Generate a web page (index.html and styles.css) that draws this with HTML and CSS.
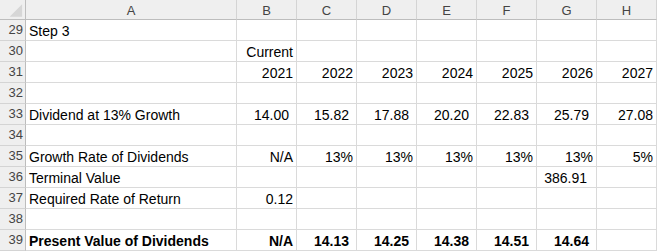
FILE: index.html
```html
<!DOCTYPE html>
<html>
<head>
<meta charset="utf-8">
<link rel="stylesheet" href="styles.css">
</head>
<body>
<div class="sheet">
  <div class="corner"><svg width="26" height="20" viewBox="0 0 26 20"><polygon points="10,17 23,17 23,4" fill="#d6d6d6"/></svg></div>
  <div class="colhead">A</div><div class="colhead">B</div><div class="colhead">C</div><div class="colhead">D</div><div class="colhead">E</div><div class="colhead">F</div><div class="colhead">G</div><div class="colhead last">H</div>

  <div class="rowhead">29</div><div class="cell">Step 3</div><div class="cell"></div><div class="cell"></div><div class="cell"></div><div class="cell"></div><div class="cell"></div><div class="cell"></div><div class="cell"></div>

  <div class="rowhead">30</div><div class="cell"></div><div class="cell num">Current</div><div class="cell"></div><div class="cell"></div><div class="cell"></div><div class="cell"></div><div class="cell"></div><div class="cell"></div>

  <div class="rowhead">31</div><div class="cell"></div><div class="cell num">2021</div><div class="cell num">2022</div><div class="cell num">2023</div><div class="cell num">2024</div><div class="cell num">2025</div><div class="cell num">2026</div><div class="cell num">2027</div>

  <div class="rowhead">32</div><div class="cell"></div><div class="cell"></div><div class="cell"></div><div class="cell"></div><div class="cell"></div><div class="cell"></div><div class="cell"></div><div class="cell"></div>

  <div class="rowhead">33</div><div class="cell">Dividend at 13% Growth</div><div class="cell acc">14.00</div><div class="cell acc">15.82</div><div class="cell acc">17.88</div><div class="cell acc">20.20</div><div class="cell acc">22.83</div><div class="cell acc">25.79</div><div class="cell num">27.08</div>

  <div class="rowhead">34</div><div class="cell"></div><div class="cell"></div><div class="cell"></div><div class="cell"></div><div class="cell"></div><div class="cell"></div><div class="cell"></div><div class="cell"></div>

  <div class="rowhead">35</div><div class="cell">Growth Rate of Dividends</div><div class="cell num">N/A</div><div class="cell num">13%</div><div class="cell num">13%</div><div class="cell num">13%</div><div class="cell num">13%</div><div class="cell num">13%</div><div class="cell num">5%</div>

  <div class="rowhead">36</div><div class="cell">Terminal Value</div><div class="cell"></div><div class="cell"></div><div class="cell"></div><div class="cell"></div><div class="cell"></div><div class="cell acc wide">386.91</div><div class="cell"></div>

  <div class="rowhead">37</div><div class="cell">Required Rate of Return</div><div class="cell num">0.12</div><div class="cell"></div><div class="cell"></div><div class="cell"></div><div class="cell"></div><div class="cell"></div><div class="cell"></div>

  <div class="rowhead">38</div><div class="cell"></div><div class="cell"></div><div class="cell"></div><div class="cell"></div><div class="cell"></div><div class="cell"></div><div class="cell"></div><div class="cell"></div>

  <div class="rowhead">39</div><div class="cell bold">Present Value of Dividends</div><div class="cell num bold">N/A</div><div class="cell acc bold">14.13</div><div class="cell acc bold">14.25</div><div class="cell acc bold">14.38</div><div class="cell acc bold">14.51</div><div class="cell acc bold">14.64</div><div class="cell"></div>
</div>
</body>
</html>
```

FILE: styles.css
```css
html, body {
  margin: 0;
  padding: 0;
  background: #ffffff;
}

.sheet {
  display: grid;
  grid-template-columns: 26px 211px repeat(7, 60px);
  grid-template-rows: 20px repeat(11, 21px);
  font-family: "Liberation Sans", Arial, sans-serif;
  font-size: 14px;
  color: #000000;
  width: 657px;
  overflow: hidden;
}

.sheet > div {
  box-sizing: border-box;
  overflow: hidden;
  white-space: nowrap;
}

.corner {
  background: #efefef;
  border-right: 1px solid #bdbdbd;
  border-bottom: 1px solid #bdbdbd;
  display: flex;
}

.corner svg {
  display: block;
}

.colhead {
  background: #efefef;
  border-right: 1px solid #d4d4d4;
  border-bottom: 1px solid #bdbdbd;
  color: #444444;
  font-size: 13px;
  display: flex;
  align-items: center;
  justify-content: center;
  padding-top: 1px;
}

.rowhead {
  background: #efefef;
  border-right: 1px solid #bdbdbd;
  border-bottom: 1px solid #d4d4d4;
  color: #444444;
  font-size: 13px;
  display: flex;
  align-items: flex-end;
  justify-content: flex-end;
  padding-right: 2px;
  padding-bottom: 2px;
  line-height: 16px;
}

.cell {
  border-right: 1px solid #dadada;
  border-bottom: 1px solid #dadada;
  display: flex;
  align-items: flex-end;
  padding-left: 3px;
  padding-right: 3px;
  padding-bottom: 1px;
  line-height: 16px;
}

.num {
  justify-content: flex-end;
}

.acc {
  justify-content: flex-end;
  padding-right: 7px;
}

.wide {
  padding-right: 9px;
}

.bold {
  font-weight: bold;
}
```
